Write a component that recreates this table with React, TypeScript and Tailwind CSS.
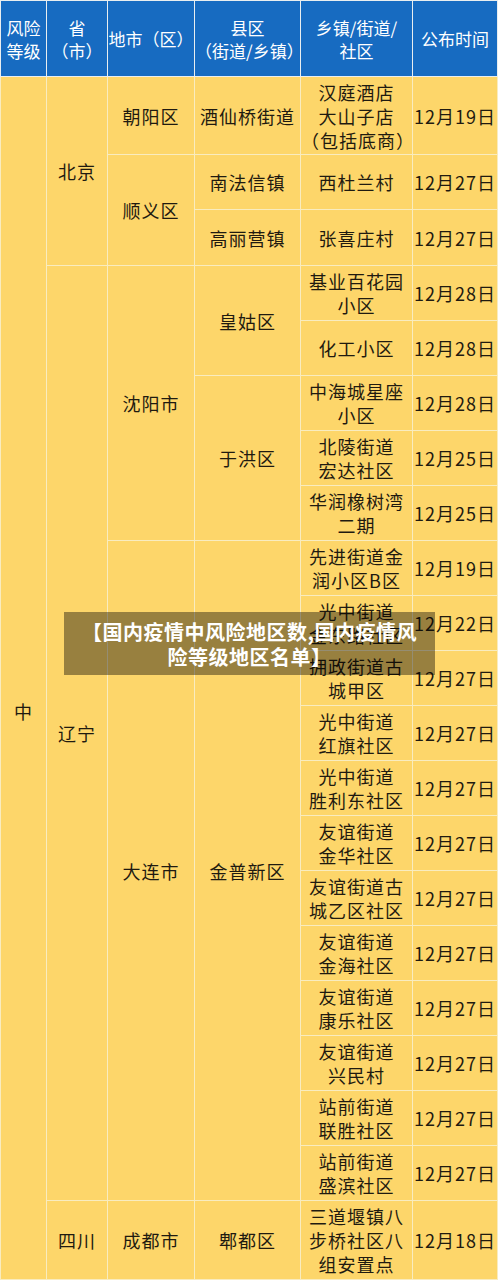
import React from "react";

type Row = {
  h: string;
  cells: { text: string[]; rowSpan?: number; pt?: string }[];
};

const rows: Row[] = [
  {
    h: "h-[78px]",
    cells: [
      { text: ["中"], rowSpan: 21, pt: "pt-[66px]" },
      { text: ["北京"], rowSpan: 3 },
      { text: ["朝阳区"] },
      { text: ["酒仙桥街道"] },
      { text: ["汉庭酒店", "大山子店", "（包括底商）"] },
      { text: ["12月19日"] },
    ],
  },
  {
    h: "h-[55px]",
    cells: [
      { text: ["顺义区"], rowSpan: 2 },
      { text: ["南法信镇"] },
      { text: ["西杜兰村"] },
      { text: ["12月27日"] },
    ],
  },
  {
    h: "h-[56px]",
    cells: [{ text: ["高丽营镇"] }, { text: ["张喜庄村"] }, { text: ["12月27日"] }],
  },
  {
    h: "h-[55px]",
    cells: [
      { text: ["辽宁"], rowSpan: 17 },
      { text: ["沈阳市"], rowSpan: 5 },
      { text: ["皇姑区"], rowSpan: 2 },
      { text: ["基业百花园", "小区"] },
      { text: ["12月28日"] },
    ],
  },
  { h: "h-[55px]", cells: [{ text: ["化工小区"] }, { text: ["12月28日"] }] },
  {
    h: "h-[55px]",
    cells: [
      { text: ["于洪区"], rowSpan: 3 },
      { text: ["中海城星座", "小区"] },
      { text: ["12月28日"] },
    ],
  },
  { h: "h-[55px]", cells: [{ text: ["北陵街道", "宏达社区"] }, { text: ["12月25日"] }] },
  { h: "h-[55px]", cells: [{ text: ["华润橡树湾", "二期"] }, { text: ["12月25日"] }] },
  {
    h: "h-[55px]",
    cells: [
      { text: ["大连市"], rowSpan: 12 },
      { text: ["金普新区"], rowSpan: 12 },
      { text: ["先进街道金", "润小区B区"] },
      { text: ["12月19日"] },
    ],
  },
  { h: "h-[55px]", cells: [{ text: ["光中街道", "金东路社区"] }, { text: ["12月22日"] }] },
  { h: "h-[55px]", cells: [{ text: ["拥政街道古", "城甲区"] }, { text: ["12月27日"] }] },
  { h: "h-[55px]", cells: [{ text: ["光中街道", "红旗社区"] }, { text: ["12月27日"] }] },
  { h: "h-[55px]", cells: [{ text: ["光中街道", "胜利东社区"] }, { text: ["12月27日"] }] },
  { h: "h-[55px]", cells: [{ text: ["友谊街道", "金华社区"] }, { text: ["12月27日"] }] },
  { h: "h-[55px]", cells: [{ text: ["友谊街道古", "城乙区社区"] }, { text: ["12月27日"] }] },
  { h: "h-[55px]", cells: [{ text: ["友谊街道", "金海社区"] }, { text: ["12月27日"] }] },
  { h: "h-[55px]", cells: [{ text: ["友谊街道", "康乐社区"] }, { text: ["12月27日"] }] },
  { h: "h-[55px]", cells: [{ text: ["友谊街道", "兴民村"] }, { text: ["12月27日"] }] },
  { h: "h-[55px]", cells: [{ text: ["站前街道", "联胜社区"] }, { text: ["12月27日"] }] },
  { h: "h-[55px]", cells: [{ text: ["站前街道", "盛滨社区"] }, { text: ["12月27日"] }] },
  {
    h: "h-[79px]",
    cells: [
      { text: ["四川"] },
      { text: ["成都市"] },
      { text: ["郫都区"] },
      { text: ["三道堰镇八", "步桥社区八", "组安置点"] },
      { text: ["12月18日"] },
    ],
  },
];

const headers = [
  ["风险", "等级"],
  ["省", "（市）"],
  ["地市（区）"],
  ["县区", "（街道/乡镇）"],
  ["乡镇/街道/", "社区"],
  ["公布时间"],
];

export default function App() {
  return (
    <main
      className="relative w-[500px] bg-white pb-[7px]"
      style={{ fontFamily: '"Noto Sans CJK SC", "Noto Sans", sans-serif' }}
    >
      <table className="w-[497px] table-fixed border-collapse">
        <colgroup>
          <col className="w-[46px]" />
          <col className="w-[61px]" />
          <col className="w-[87px]" />
          <col className="w-[106px]" />
          <col className="w-[112px]" />
          <col className="w-[85px]" />
        </colgroup>
        <thead>
          <tr className="h-[76px] bg-[#176bc1]">
            {headers.map((lines, i) => (
              <th
                key={i}
                className="border border-[#e9eef0] p-0 text-center align-middle text-[17px] font-normal leading-[23px] text-white"
              >
                {lines.map((l) => (
                  <div key={l}>{l}</div>
                ))}
              </th>
            ))}
          </tr>
        </thead>
        <tbody className="bg-[#fdd66a]">
          {rows.map((row, ri) => (
            <tr key={ri} className={row.h}>
              {row.cells.map((c, ci) => (
                <td
                  key={ci}
                  rowSpan={c.rowSpan}
                  className={`border border-[#f9ecbf] p-0 text-center align-middle text-[18px] leading-[24px] tracking-[1px] text-[#1f1a10] ${c.pt ?? ""}`}
                >
                  {c.text.map((l) => (
                    <div key={l}>{l}</div>
                  ))}
                </td>
              ))}
            </tr>
          ))}
        </tbody>
      </table>

      {/* watermark caption laid over the table */}
      <div className="absolute left-[64px] top-[612px] flex h-[63px] w-[371px] flex-col items-center justify-center bg-black/40 text-[20px] font-bold leading-[25px] tracking-[0.5px] text-white">
        <div>【国内疫情中风险地区数,国内疫情风</div>
        <div>险等级地区名单】</div>
      </div>
    </main>
  );
}
